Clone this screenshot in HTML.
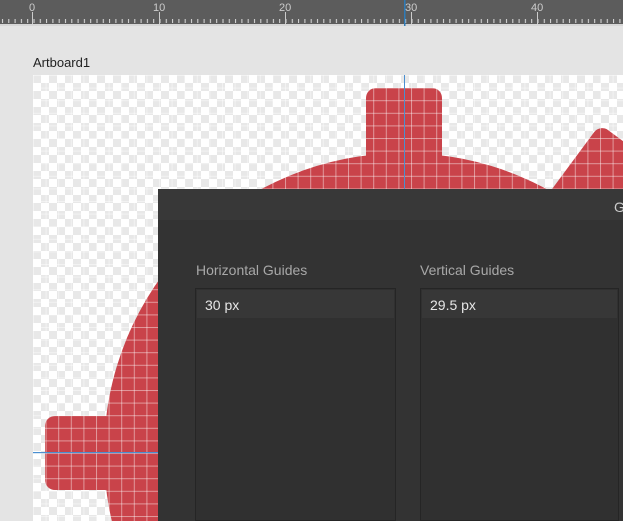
<!DOCTYPE html>
<html><head><meta charset="utf-8"><style>
html,body{margin:0;padding:0;width:623px;height:521px;overflow:hidden;background:#e4e4e4;font-family:"Liberation Sans",sans-serif}
</style></head><body>
<svg width="623" height="521" viewBox="0 0 623 521" style="position:absolute;left:0;top:0">
<defs>
<pattern id="chk" x="33" y="75" width="16" height="16" patternUnits="userSpaceOnUse">
<rect width="16" height="16" fill="#fff"/><rect width="8" height="8" fill="#e8e8e8"/><rect x="8" y="8" width="8" height="8" fill="#e8e8e8"/>
</pattern>
<pattern id="grid" x="33" y="75" width="12.6" height="12.6" patternUnits="userSpaceOnUse">
<rect x="0" y="0" width="1" height="12.6" fill="#fff" opacity="0.45"/><rect x="0" y="0" width="12.6" height="1" fill="#fff" opacity="0.45"/>
</pattern>
<pattern id="tick" x="0" y="0" width="6.3" height="26" patternUnits="userSpaceOnUse">
<rect x="2" y="19" width="1" height="4" fill="#ddd"/>
</pattern>
<clipPath id="ab"><rect x="33" y="75" width="590" height="446"/></clipPath>
</defs>
<rect x="0" y="0" width="623" height="24" fill="#5c5c5c"/>
<rect x="0" y="0" width="623" height="24" fill="url(#tick)"/>
<rect x="0" y="24" width="623" height="2" fill="#d6d6d6"/>
<g fill="#ccc" font-size="11">
<rect x="32" y="12" width="1" height="12"/><text x="29" y="11">0</text>
<rect x="159" y="12" width="1" height="12"/><text x="153" y="11">10</text>
<rect x="285" y="12" width="1" height="12"/><text x="279" y="11">20</text>
<rect x="411" y="12" width="1" height="12"/><text x="405" y="11">30</text>
<rect x="537" y="12" width="1" height="12"/><text x="531" y="11">40</text>
</g>
<rect x="404" y="0" width="1.5" height="26" fill="#2e7bb8"/>
<text x="33" y="67" font-size="13" fill="#222">Artboard1</text>
<g clip-path="url(#ab)">
<rect x="33" y="75" width="590" height="446" fill="url(#chk)"/>
<g fill="#c9434a">
<circle cx="404" cy="453" r="300"/>
<rect x="366" y="88" width="76" height="120" rx="10"/>
<rect x="45" y="416" width="120" height="74" rx="10"/>
<rect x="366" y="72" width="86" height="140" rx="10" transform="rotate(36.5 404 453)"/>
</g>
<rect x="33" y="75" width="590" height="446" fill="url(#grid)"/>
<rect x="404" y="75" width="1" height="446" fill="#4a8fd0"/>
<rect x="33" y="452" width="590" height="1.2" fill="#4a8fd0"/>
</g>
<rect x="158" y="189" width="465" height="332" fill="#333"/>
<rect x="158" y="189" width="465" height="31" fill="#383838"/>
<text x="614" y="212" font-size="14" fill="#ccc">G</text>
<text x="196" y="275" font-size="14" fill="#a8a8a8">Horizontal Guides</text>
<text x="420" y="275" font-size="14" fill="#a8a8a8">Vertical Guides</text>
<rect x="195.5" y="288.5" width="200" height="232" fill="#303030" stroke="#252525"/>
<rect x="197" y="290" width="197" height="28" fill="#373737"/>
<text x="205" y="310" font-size="14" fill="#e6e6e6">30 px</text>
<rect x="420.5" y="288.5" width="198" height="232" fill="#303030" stroke="#252525"/>
<rect x="422" y="290" width="195" height="28" fill="#373737"/>
<text x="430" y="310" font-size="14" fill="#e6e6e6">29.5 px</text>
</svg>
</body></html>
